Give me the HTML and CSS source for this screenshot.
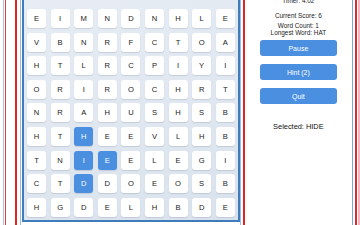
FILE: index.html
```html
<!DOCTYPE html>
<html lang="en">
<head>
    <meta charset="UTF-8">
    <meta name="viewport" content="width=device-width, initial-scale=1.0">
    <title>Word Search</title>
    <link rel="stylesheet" href="styles.css">
</head>
<body>

    <div class="app">
      <div class="shell">

        <div class="board-wrap">
          <div class="board-edge">
            <div class="grid">
              <div class="cell">E</div><div class="cell">I</div><div class="cell">M</div><div class="cell">N</div><div class="cell">D</div><div class="cell">N</div><div class="cell">H</div><div class="cell">L</div><div class="cell">E</div>
              <div class="cell">V</div><div class="cell">B</div><div class="cell">N</div><div class="cell">R</div><div class="cell">F</div><div class="cell">C</div><div class="cell">T</div><div class="cell">O</div><div class="cell">A</div>
              <div class="cell">H</div><div class="cell">T</div><div class="cell">L</div><div class="cell">R</div><div class="cell">C</div><div class="cell">P</div><div class="cell">I</div><div class="cell">Y</div><div class="cell">I</div>
              <div class="cell">O</div><div class="cell">R</div><div class="cell">I</div><div class="cell">R</div><div class="cell">O</div><div class="cell">C</div><div class="cell">H</div><div class="cell">R</div><div class="cell">T</div>
              <div class="cell">N</div><div class="cell">R</div><div class="cell">A</div><div class="cell">H</div><div class="cell">U</div><div class="cell">S</div><div class="cell">H</div><div class="cell">S</div><div class="cell">B</div>
              <div class="cell">H</div><div class="cell">T</div><div class="cell selected">H</div><div class="cell">E</div><div class="cell">E</div><div class="cell">V</div><div class="cell">L</div><div class="cell">H</div><div class="cell">B</div>
              <div class="cell">T</div><div class="cell">N</div><div class="cell selected">I</div><div class="cell selected">E</div><div class="cell">E</div><div class="cell">L</div><div class="cell">E</div><div class="cell">G</div><div class="cell">I</div>
              <div class="cell">C</div><div class="cell">T</div><div class="cell selected">D</div><div class="cell">D</div><div class="cell">O</div><div class="cell">E</div><div class="cell">O</div><div class="cell">S</div><div class="cell">B</div>
              <div class="cell">H</div><div class="cell">G</div><div class="cell">D</div><div class="cell">E</div><div class="cell">L</div><div class="cell">H</div><div class="cell">B</div><div class="cell">D</div><div class="cell">E</div>
            </div>
          </div>
        </div>

        <div class="panel">
          <p class="stat">Timer: 4:02</p>
          <p class="stat score">Current Score: 6</p>
          <p class="stat count">Word Count: 1</p>
          <p class="stat">Longest Word: HAT</p>

          <button class="btn">Pause</button>
          <button class="btn">Hint (2)</button>
          <button class="btn">Quit</button>

          <p class="selected-word">Selected: HIDE</p>
        </div>

      </div>
    </div>

</body>
</html>
```

FILE: styles.css
```css
body {
    margin: 0;
    background-color: #fff;
    font-family: "Liberation Sans", Arial, sans-serif;
    overflow: hidden;
}

/* page is shown scrolled a little, top of the board is out of view */
.app {
    margin: -14px 0 0 3px;
    height: 239px;
    border-left: 1px solid #a9c2e6;
    border-right: 2px solid #f3b5c1;
    padding: 0 1px;
}

.shell {
    display: flex;
    height: 100%;
    border-left: 1px solid #e13a3a;
    border-right: 2px solid #e02828;
    padding: 0 2px 0 9px;
}

.board-wrap {
    border-left: 2px solid #e02424;
    border-right: 2px solid #e02424;
    padding: 0 2px 0 3px;
}

.board-edge {
    border-left: 1px solid #9dbbe0;
    border-right: 1px solid #9dbbe0;
    padding-left: 1px;
    height: 100%;
}

.grid {
    display: grid;
    grid-template-columns: repeat(9, 19px);
    grid-auto-rows: 19px;
    gap: 4.6px;
    padding: 21px 3px 3px;
    border: 2px solid #3f7cbc;
    background: linear-gradient(160deg, #e8edf4, #d9e2ed);
}

.cell {
    display: flex;
    align-items: center;
    justify-content: center;
    background-color: #fff;
    border-radius: 3px;
    box-shadow: 0 1px 1px rgba(40, 60, 90, 0.15);
    font-size: 7.6px;
    color: #222;
}

.cell.selected {
    background-color: #4a8fe0;
    color: #fff;
}

.panel {
    flex: 1;
    border-right: 1px solid #7fa6d8;
    padding-top: 11px;
    text-align: center;
    color: #222;
}

.stat {
    margin: 0;
    font-size: 6.4px;
    line-height: 7px;
}

.score {
    margin-top: 7.5px;
}

.count {
    margin-top: 3.5px;
}

.btn {
    display: block;
    width: 77px;
    height: 16px;
    margin: 4px auto 8px;
    padding: 0;
    border: none;
    border-radius: 3px;
    background-color: #4a8fe0;
    color: #fff;
    font-family: "Liberation Sans", Arial, sans-serif;
    font-size: 7px;
}

.btn + .btn {
    margin-top: 0;
}

.selected-word {
    margin: 19px 0 0;
    font-size: 7.4px;
    line-height: 8px;
    color: #111;
}
```
